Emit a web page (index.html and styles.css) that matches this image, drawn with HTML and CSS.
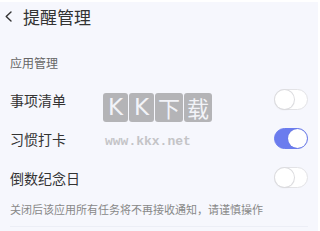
FILE: index.html
```html
<!DOCTYPE html>
<html lang="zh">
<head>
<meta charset="utf-8">
<link rel="stylesheet" href="styles.css">
</head>
<body>
<div class="page">
  <div class="header">
    <svg class="back" width="9" height="11" viewBox="0 0 9 11"><path d="M7 1 L2.2 5.5 L7 10" fill="none" stroke="#333" stroke-width="1.4" stroke-linecap="round" stroke-linejoin="round"/></svg>
    <span class="title">提醒管理</span>
  </div>
  <div class="section">应用管理</div>
  <div class="list">
    <div class="row"><span class="label">事项清单</span><span class="toggle"><span class="knob"></span></span></div>
    <div class="row"><span class="label">习惯打卡</span><span class="toggle on"><span class="knob"></span></span></div>
    <div class="row"><span class="label">倒数纪念日</span><span class="toggle"><span class="knob"></span></span></div>
  </div>
  <div class="note">关闭后该应用所有任务将不再接收通知，请谨慎操作</div>
  <div class="divider"></div>
  <div class="watermark">
    <div class="wm-blocks"><span class="b">K</span><span class="b">K</span><span class="b">下</span><span class="b">载</span></div>
    <div class="wm-url">www.kkx.net</div>
  </div>
</div>
</body>
</html>
```
FILE: styles.css
```css
html, body {
  margin: 0;
  padding: 0;
  background: #ffffff;
}
body {
  font-family: "Noto Sans CJK SC", "Noto Sans", sans-serif;
  overflow: hidden;
}
.page {
  position: relative;
  width: 318px;
  height: 229px;
  margin-top: 2px;
  background: #f6f7fd;
}
.header {
  height: 29px;
  display: flex;
  align-items: center;
  padding-left: 4px;
}
.back {
  display: block;
}
.title {
  margin-left: 10px;
  font-size: 17px;
  color: #333333;
  line-height: 24px;
}
.section {
  padding: 24px 0 0 10px;
  height: 16px;
  line-height: 16px;
  font-size: 12px;
  color: #666666;
}
.list {
  margin-top: 9px;
}
.row {
  height: 39px;
  display: flex;
  align-items: center;
  justify-content: space-between;
  padding: 0 10px;
}
.label {
  font-size: 14px;
  color: #333333;
}
.toggle {
  position: relative;
  width: 34px;
  height: 21px;
  box-sizing: border-box;
  border-radius: 11px;
  background: #ffffff;
  border: 1px solid #e3e3e6;
}
.knob {
  position: absolute;
  left: 0;
  top: 0;
  width: 19px;
  height: 19px;
  border-radius: 50%;
  background: #ffffff;
  box-shadow: 0 0 0 1px #dcdcdf, 0 1px 2px rgba(0,0,0,0.08);
}
.toggle.on {
  background: #6b7cee;
  border-color: #6b7cee;
}
.toggle.on .knob {
  left: 13px;
  box-shadow: 0 0 1px rgba(0,0,0,0.15);
}
.note {
  padding: 5px 0 0 10px;
  font-size: 11px;
  line-height: 15px;
  color: #888888;
}
.divider {
  margin: 9px 10px 0 10px;
  height: 1px;
  background: #eceef6;
}
.watermark {
  position: absolute;
  left: 103px;
  top: 91px;
  width: 112px;
}
.wm-blocks {
  display: flex;
  gap: 1px;
}
.b {
  width: 25px;
  height: 29px;
  background: #b4b4b7;
  color: #f2f3f8;
  font-family: "DejaVu Sans", sans-serif;
  font-size: 23px;
  line-height: 29px;
  text-align: center;
  border-radius: 3px;
}
.b:nth-child(3), .b:nth-child(4) {
  font-family: "Noto Sans CJK SC", sans-serif;
  font-size: 22px;
  width: 28px;
}
.wm-url {
  margin-top: 14px;
  margin-left: 2px;
  font-family: "Liberation Mono", monospace;
  font-weight: bold;
  font-size: 13px;
  line-height: 12px;
  color: #c4c4c7;
}
```
